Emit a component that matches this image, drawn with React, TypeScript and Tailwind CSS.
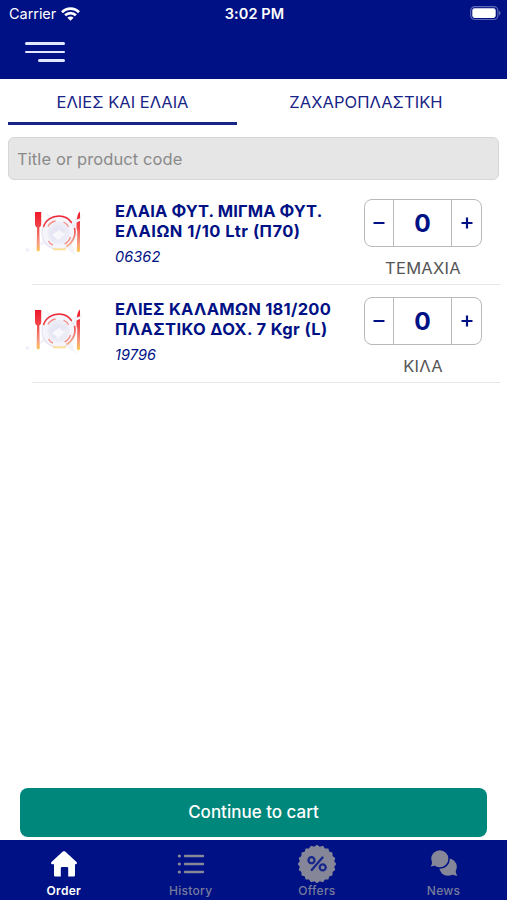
import { useState } from 'react';

const productos = [
  {
    id: '06362',
    lineas: [
      { texto: 'ΕΛΑΙΑ ΦΥΤ. ΜΙΓΜΑ ΦΥΤ.', clase: 'tracking-[0.12px]' },
      { texto: 'ΕΛΑΙΩΝ 1/10 Ltr (Π70)', clase: 'tracking-[0.48px]' },
    ],
    unidad: 'ΤΕΜΑΧΙΑ',
  },
  {
    id: '19796',
    lineas: [
      { texto: 'ΕΛΙΕΣ ΚΑΛΑΜΩΝ 181/200', clase: 'tracking-[0.27px]' },
      { texto: 'ΠΛΑΣΤΙΚΟ ΔΟΧ. 7 Kgr (L)', clase: 'tracking-[0.35px]' },
    ],
    unidad: 'ΚΙΛΑ',
  },
];

function StatusBar() {
  return (
    <div className="flex h-7 items-center justify-between pl-[9px] pr-[9px] text-white">
      <div className="flex w-[200px] items-center gap-[5px]">
        <span className="text-[14.5px] leading-5 tracking-[-0.05px]">Carrier</span>
        <svg width="19" height="14" viewBox="0 0 19 14" fill="none" stroke="currentColor" strokeWidth="2.7">
          <path d="M1 5.2C5.8.4 13.2.4 18 5.2" />
          <path d="M4.1 8.3c3.1-3 7.7-3 10.8 0" />
          <path d="M6.4 10.8c1.8-1.6 4.4-1.6 6.2 0L9.5 13.8z" fill="currentColor" stroke="none" />
        </svg>
      </div>
      <span className="text-[14.5px] font-semibold leading-5 tracking-[0.1px]">3:02 PM</span>
      <div className="-mr-[2px] flex w-[200px] justify-end">
        <svg className="-mr-[2px] -mt-[2px]" width="32" height="15" viewBox="0 0 32 15">
          <rect x="0.7" y="0.7" width="27.2" height="12.8" rx="4" fill="none" stroke="#5f68b4" strokeWidth="1.2" />
          <rect x="2.3" y="2.3" width="23.4" height="9.6" rx="2.3" fill="#fff" />
          <path d="M29 4.8c2 .8 2 3.8 0 4.6z" fill="#5f68b4" />
        </svg>
      </div>
    </div>
  );
}

// Plato con cubiertos, imagen por defecto del producto
function Plato({ id }: { id: string }) {
  const grad = `fuego-${id}`;
  return (
    <svg width="62" height="52" viewBox="0 0 62 52" fill="none">
      <defs>
        <linearGradient id={grad} x1="0" y1="4" x2="0" y2="45" gradientUnits="userSpaceOnUse">
          <stop offset="0" stopColor="#f0182c" />
          <stop offset="0.4" stopColor="#f04a4c" />
          <stop offset="0.75" stopColor="#f79a80" />
          <stop offset="1" stopColor="#fbcf50" />
        </linearGradient>
      </defs>
      <path d="M21 4l8 7h9l8 2 12-7-7 10 1 12-5 8 4 12-10-8-13 1-9-5-8 4 8-9-1-12 6-5z" fill="#f3f3fa" />
      <circle cx="33.5" cy="25" r="16.5" fill="#f5f4fb" stroke="#e6e4f3" strokeWidth="1.2" />
      <path d="M18.500 19C20.500 12 27 8 34 8c5.500 0 10 2.500 13 7M49.500 20c1.800 8-2 15-8 18.500" stroke={`url(#${grad})`} strokeWidth="1.600" />
      <path d="M23 18.500c1.400-3 4-4.700 7.500-5.500M38.500 14c2.500 1.200 4 2.600 5 5M45.500 29c-1.200 3.500-3.400 5.800-6 7M23.500 33c1 2 2.600 3.400 4.500 4.200" stroke="#f48a82" strokeWidth="1.300" />
      <circle cx="33.5" cy="25" r="11" fill="#ececf7" />
      <path d="M24 24l8-7 9 4-5 8-8 4z" fill="#e6e6f4" />
      <path d="M27 27l7-5 6 4-7 6z" fill="#f7f7fc" />
      <path d="M28 41.3h13" stroke="#fbe09a" strokeWidth="2" />
      <path d="M10 4h6.200v12c0 2-1 3-1.900 3.500l.5 22.500c0 1.800-3.200 1.800-3.200 0l.5-22.500C11 19 10 18 10 16z" fill={`url(#${grad})`} />
      <path d="M55 3.500c-2.800 2.200-3.500 7.500-3.500 16.500l.8 3-.5 19.500c0 2.200 3.200 2.200 3.200 0z" fill={`url(#${grad})`} />
      <path d="M47 13.500l10-4-1 3-9 4z" fill="#f3f3fa" />
      <circle cx="2.5" cy="42" r="2" fill="#f1f1fa" />
    </svg>
  );
}

function Contador() {
  const [cantidad, setCantidad] = useState(0);

  return (
    <div className="grid h-12 w-[118px] grid-cols-[28px_59px_29px] overflow-hidden rounded-[8px] border border-[#b9b9b9] text-[#001185]">
      <button className="flex items-center justify-center" onClick={() => setCantidad(Math.max(0, cantidad - 1))}>
        <svg className="-ml-px" width="12" height="12" viewBox="0 0 12 12" stroke="currentColor" strokeWidth="2.2">
          <path d="M.5 6h11" />
        </svg>
      </button>
      <span className="flex items-center justify-center border-x border-[#b9b9b9] text-[24.5px] font-bold leading-none">
        {cantidad}
      </span>
      <button className="flex items-center justify-center" onClick={() => setCantidad(cantidad + 1)}>
        <svg width="12" height="12" viewBox="0 0 12 12" stroke="currentColor" strokeWidth="2.2">
          <path d="M.5 6h11M6 .5v11" />
        </svg>
      </button>
    </div>
  );
}

function ProductoFila({ p }: { p: any }) {
  return (
    <div className="ml-8 mr-[7px] flex h-[98px] border-b border-[#e6e6e6]">
      <div className="-ml-[7px] w-[90px] pt-[21px]">
        <Plato id={p.id} />
      </div>
      <div className="w-[249px] pt-[14px] text-[#001185]">
        {p.lineas.map((l: any) => (
          <p key={l.texto} className={`whitespace-nowrap text-[16.5px] font-bold leading-5 ${l.clase}`}>{l.texto}</p>
        ))}
        <p className="mt-[5px] text-[14.5px] italic leading-[22px] tracking-[0.1px]">{p.id}</p>
      </div>
      <div className="flex w-[118px] flex-col items-center pt-3">
        <Contador />
        <span className="mt-[11px] text-[16.5px] leading-5 tracking-[0.3px] text-[#555]">{p.unidad}</span>
      </div>
    </div>
  );
}

// Borde dentado del sello de ofertas
const sello = Array.from({ length: 80 }, (_, i) => {
  const a = (i / 80) * Math.PI * 2;
  const r = 18.3 + Math.cos(a * 20) * 0.9;
  return `${(20 + r * Math.cos(a)).toFixed(2)},${(20 + r * Math.sin(a)).toFixed(2)}`;
}).join(' ');

function TabBar() {
  return (
    <nav className="grid h-[60px] grid-cols-4 bg-[#001185] text-[12px] font-medium text-[#777c9c]">
      <div className="flex flex-col items-center pl-px text-white">
        <div className="flex h-[43px] items-center pt-[4px]">
          <svg width="28" height="28" viewBox="0 0 28 28" fill="currentColor">
            <path d="M12.8 1.6c.7-.6 1.7-.6 2.4 0l11.3 10.500c1 1 .4 2.200-.8 2.200h-.7V25c0 1-.6 1.600-1.600 1.600h-5.200v-8c0-1-.5-1.500-1.400-1.500h-4.600c-.9 0-1.400.5-1.400 1.500v8H5.600c-1 0-1.600-.6-1.600-1.600V14.300h-1.700c-1.200 0-1.800-1.200-.8-2.200z" />
          </svg>
        </div>
        <span className="leading-4 tracking-[0.3px] font-semibold">Order</span>
      </div>
      <div className="flex flex-col items-center pl-px">
        <div className="flex h-[43px] items-center pt-[4px]">
          <svg width="28" height="24" viewBox="0 0 28 24" stroke="#858799" strokeWidth="2.4" strokeLinecap="round">
            <path d="M8 4h18M8 12h18M8 20h18" />
            <path d="M2.3 4h.1M2.3 12h.1M2.3 20h.1" strokeWidth="3.2" />
          </svg>
        </div>
        <span className="leading-4 tracking-[0.3px]">History</span>
      </div>
      <div className="flex flex-col items-center">
        <div className="flex h-[43px] items-center pt-[4px]">
          <svg width="40" height="40" viewBox="0 0 40 40">
            <polygon points={sello} fill="#858799" />
            <g fill="none" stroke="#18278b" strokeWidth="2.3" strokeLinecap="round">
              <circle cx="14.5" cy="16.2" r="3" />
              <circle cx="25.7" cy="23.4" r="3" />
              <path d="M25.500 13.500L14.700 26" />
            </g>
          </svg>
        </div>
        <span className="leading-4 tracking-[0.3px]">Offers</span>
      </div>
      <div className="flex flex-col items-center">
        <div className="flex h-[43px] items-center pt-[3px]">
          <svg width="28" height="28" viewBox="0 0 28 28" fill="#858799">
            <circle cx="18" cy="18" r="8.8" />
            <path d="M25.500 20c-.2 2.500.6 4.500 1.800 6.800-2.800-.3-5-1.200-6.300-2.600z" />
            <g stroke="#001185" strokeWidth="1.500">
              <circle cx="9.800" cy="9.800" r="9.300" />
            </g>
            <path d="M2 12c.2 2.200-.3 3.800-1.300 5.500 2.300 0 4-.8 5.300-2z" />
          </svg>
        </div>
        <span className="leading-4 tracking-[0.3px]">News</span>
      </div>
    </nav>
  );
}

export default function App() {
  return (
    <div className="flex h-[900px] w-[507px] flex-col bg-white font-['Inter','Liberation_Sans',sans-serif]">
      {/* CABECERA */}
      <header className="h-[79px] bg-[#001185]">
        <StatusBar />
        <button className="ml-[25px] mt-[14px] flex w-10 flex-col items-end gap-[6px]">
          <span className="h-[2.5px] w-full rounded-full bg-[#e4e8ff]" />
          <span className="h-[2.5px] w-full rounded-full bg-[#e4e8ff]" />
          <span className="h-[2.5px] w-[27px] rounded-full bg-[#e4e8ff]" />
        </button>
      </header>

      {/* CATEGORÍAS */}
      <div className="flex h-[46px] pl-2 text-[16.5px] text-[#182487]">
        <div className="flex w-[229px] items-center justify-center border-b-[3px] border-[#182487] pt-[3px]">
          ΕΛΙΕΣ ΚΑΙ ΕΛΑΙΑ
        </div>
        <div className="flex w-[257px] items-center justify-center pl-px tracking-[0.05px]">ΖΑΧΑΡΟΠΛΑΣΤΙΚΗ</div>
      </div>

      <div className="mx-2 mt-3 flex h-[43px] w-[491px] shrink-0 items-center rounded-[6px] border border-[#d6d6d6] bg-[#e6e6e6] pl-2 pt-px text-[16.5px] tracking-[0.1px] text-[#8a8a8a]">
        Title or product code
      </div>

      <main className="flex-1 pt-[7px]">
        {productos.map((p) => (
          <ProductoFila key={p.id} p={p} />
        ))}
      </main>

      <button className="mb-[3px] ml-5 h-[49px] w-[467px] rounded-[8px] bg-[#00877b] text-[17px] font-medium text-white">
        Continue to cart
      </button>
      <TabBar />
    </div>
  );
}
